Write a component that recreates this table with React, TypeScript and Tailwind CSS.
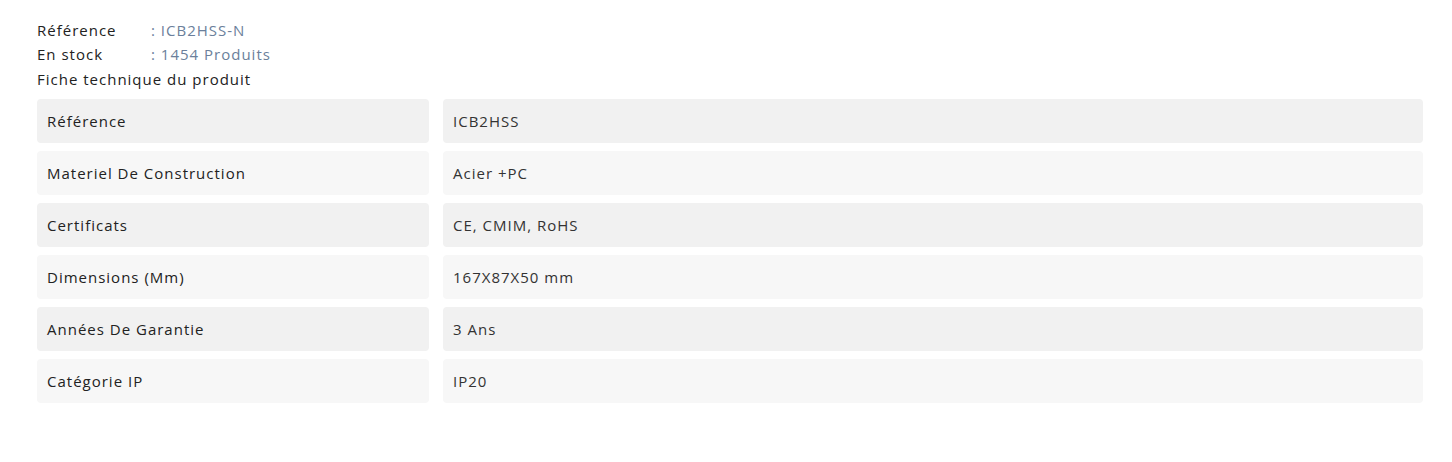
import React from "react";

const rows: [string, string][] = [
  ["Référence", "ICB2HSS"],
  ["Materiel De Construction", "Acier +PC"],
  ["Certificats", "CE, CMIM, RoHS"],
  ["Dimensions (Mm)", "167X87X50 mm"],
  ["Années De Garantie", "3 Ans"],
  ["Catégorie IP", "IP20"],
];

export default function App() {
  return (
    <div
      className="w-[1452px] h-[462px] bg-white pl-[37px] pr-[29px] pt-[18px] text-[#222]"
      style={{ fontFamily: '"Open Sans", "Liberation Sans", sans-serif' }}
    >
      <div className="text-[15px] leading-[24px] tracking-[1px]">
        <div className="flex">
          <span className="w-[114px]">Référence</span>
          <span className="text-[#6b7f9b]">: ICB2HSS-N</span>
        </div>
        <div className="flex">
          <span className="w-[114px]">En stock</span>
          <span className="text-[#6b7f9b]">: 1454 Produits</span>
        </div>
        <div className="leading-[26px]">Fiche technique du produit</div>
      </div>
      <div className="mt-[7px] flex flex-col gap-[8px]">
        {rows.map(([k, v], i) => (
          <div key={k} className="flex gap-[14px] h-[44px]">
            <div
              className={`w-[392px] rounded-[4px] flex items-center pl-[10px] text-[15px] font-medium tracking-[1px] text-[#222] ${
                i % 2 === 0 ? "bg-[#f1f1f1]" : "bg-[#f7f7f7]"
              }`}
            >
              {k}
            </div>
            <div
              className={`flex-1 rounded-[4px] flex items-center pl-[10px] text-[15px] tracking-[1px] text-[#333] ${
                i % 2 === 0 ? "bg-[#f1f1f1]" : "bg-[#f7f7f7]"
              }`}
            >
              {v}
            </div>
          </div>
        ))}
      </div>
    </div>
  );
}
